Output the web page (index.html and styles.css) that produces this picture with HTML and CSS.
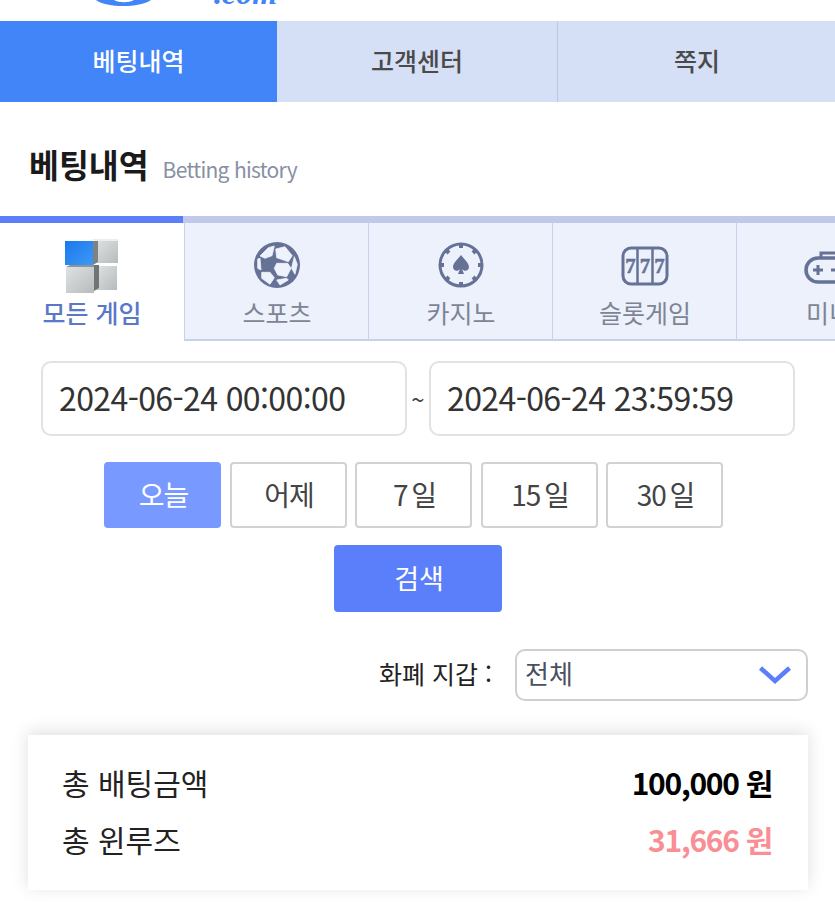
FILE: index.html
```html
<!DOCTYPE html>
<html lang="ko">
<head>
  <meta charset="UTF-8" />
  <title>베팅내역</title>
  <link rel="stylesheet" href="styles.css">
</head>
<body>
  <!-- 로고 (위쪽이 잘려 있음) -->
  <div class="logo-bar">
    <svg class="logo-arc" width="60" height="8" viewBox="0 0 60 8"><path d="M1 0 C12 8 44 8 56 0Z" fill="#4285f8"/><path d="M19 0 C24 3 34 3 39 0Z" fill="#fff"/></svg>
    <span class="logo-com">.com</span>
  </div>

  <nav class="top-nav">
    <a class="top-nav-item active">베팅내역</a>
    <a class="top-nav-item mid">고객센터</a>
    <a class="top-nav-item">쪽지</a>
  </nav>

  <div class="page-title">
    <h2>베팅내역</h2>
    <span>Betting history</span>
  </div>

  <div class="game-tabs">
    <div class="game-tab active">
      <svg class="tab-icon" width="54" height="56" viewBox="0 0 54 56">
        <defs>
          <linearGradient id="grey" x1="0" y1="0" x2="1" y2="1"><stop offset="0" stop-color="#dfe2e2"/><stop offset="1" stop-color="#b6bbbd"/></linearGradient>
          <linearGradient id="blue" x1="0" y1="0" x2="1" y2="1"><stop offset="0" stop-color="#1a78ee"/><stop offset="1" stop-color="#3d99f4"/></linearGradient>
        </defs>
        <rect x="30" y="2" width="23" height="22" fill="url(#grey)"/>
        <path d="M27 0 L53 0 L53 2 L30 2Z" fill="#eceeee"/>
        <path d="M28 2 L28 26 L33 23 L33 2Z" fill="#7d8385"/>
        <rect x="0" y="2" width="28" height="24" fill="url(#blue)"/>
        <rect x="31" y="27" width="21" height="24" fill="url(#grey)"/>
        <path d="M29 26 L29 52 L34 49 L34 26Z" fill="#6f7577"/>
        <rect x="1" y="28" width="28" height="26" fill="url(#grey)"/>
        <path d="M1 28 L5 26 L29 26 L29 28Z" fill="#8e9496"/>
      </svg>
      <span>모든 게임</span>
    </div>
    <div class="game-tab">
      <svg class="tab-icon" width="54" height="56" viewBox="0 0 54 56">
        <circle cx="27" cy="26" r="23" fill="#667196"/>
        <path fill="#eef2fd" stroke="#eef2fd" stroke-width=".8" stroke-linejoin="round" d="M10 17 L18.300 8.700 L24.300 7 L22 16.700 L15 19.300Z M25.700 10 L35 7.700 L42.300 16.700 L38.300 22.700 L26.700 18.700Z M44.300 17.700 L47.300 25.300 L45 35.300 L41.500 29.300Z M26.700 24.300 L37.700 24.300 L41 29.300 L36.700 37.700 L27.700 36 L24.300 29.300Z M11.700 33.300 L20 33.300 L24.300 38.700 L20 45.300 L11.700 39.300Z M26.700 41 L36.700 39.300 L38.300 41 L30 46Z M7.700 20 L10 19.300 L11 31 L7.700 29.300Z"/>
      </svg>
      <span>스포츠</span>
    </div>
    <div class="game-tab">
      <svg class="tab-icon" width="54" height="56" viewBox="0 0 54 56">
        <circle cx="27" cy="26" r="21" fill="none" stroke="#667196" stroke-width="3"/>
        <g stroke="#667196" stroke-width="4">
          <path d="M27 4v5M27 43v5M5 26h5M44 26h5M11.500 10.500l3.500 3.500M39 38l3.500 3.500M42.500 10.500L39 14M15 38l-3.500 3.500"/>
        </g>
        <path fill="#667196" d="M27 16 C30 20 35 24 35 28 C35 32 30 33 28 30 L30 35 L24 35 L26 30 C24 33 19 32 19 28 C19 24 24 20 27 16Z"/>
      </svg>
      <span>카지노</span>
    </div>
    <div class="game-tab">
      <svg class="tab-icon" width="54" height="56" viewBox="0 0 54 56">
        <rect x="5" y="9" width="44" height="36" rx="8" fill="none" stroke="#667196" stroke-width="3"/>
        <path d="M19.500 9v36M34.500 9v36" stroke="#667196" stroke-width="2.500"/>
        <g class="slot-seven">
          <text x="12.500" y="34">7</text>
          <text x="27" y="34">7</text>
          <text x="41.500" y="34">7</text>
        </g>
      </svg>
      <span>슬롯게임</span>
    </div>
    <div class="game-tab">
      <svg class="tab-icon" width="54" height="56" viewBox="0 0 54 56">
        <path d="M19 19 V14 H35 V19" fill="none" stroke="#667196" stroke-width="3"/>
        <rect x="4" y="19" width="46" height="24" rx="12" fill="none" stroke="#667196" stroke-width="3.500"/>
        <path d="M11 31h10M16 26v10M29 31h4" stroke="#667196" stroke-width="3"/>
      </svg>
      <span>미니</span>
    </div>
  </div>

  <div class="date-range">
    <div class="date-input">2024-06-24 00:00:00</div>
    <span class="tilde">~</span>
    <div class="date-input">2024-06-24 23:59:59</div>
  </div>

  <div class="quick-days">
    <button class="day-btn active">오늘</button>
    <button class="day-btn">어제</button>
    <button class="day-btn">7 일</button>
    <button class="day-btn">15 일</button>
    <button class="day-btn">30 일</button>
  </div>

  <div class="search-row">
    <button class="search-btn">검색</button>
  </div>

  <div class="wallet-row">
    <label class="wallet-label">화폐 지갑 :</label>
    <div class="wallet-select">
      <span>전체</span>
      <svg width="34" height="20" viewBox="0 0 34 20"><path d="M2.500 3 L17 16 L31.500 3" fill="none" stroke="#5b7ffb" stroke-width="4.500"/></svg>
    </div>
  </div>

  <div class="summary">
    <div class="summary-row">
      <span>총 배팅금액</span>
      <strong>100,000 원</strong>
    </div>
    <div class="summary-row">
      <span>총 윈루즈</span>
      <strong class="loss">31,666 원</strong>
    </div>
  </div>
</body>
</html>
```

FILE: styles.css
```css
html, body { margin: 0; padding: 0; height: 902px; overflow: hidden; }
body { width: 835px; background: #fff; font-family: "Noto Sans CJK KR", "Noto Sans", sans-serif; color: #222; }
button { font-family: inherit; }

.logo-bar { height: 21px; overflow: hidden; position: relative; }
.logo-arc { position: absolute; left: 95px; top: 0; }
.logo-com { position: absolute; left: 214px; top: -25px; font: italic bold 32px "Liberation Serif", serif; color: #4285f8; }

.top-nav { display: flex; height: 81px; background: #d5dff5; }
.top-nav-item { flex: 0 0 278px; box-sizing: border-box; display: flex; align-items: center; justify-content: center; padding-bottom: 4px; font-size: 25px; font-weight: 500; color: #4a4a4a; }
.top-nav-item.active { flex-basis: 277px; background: #4285f8; color: #fff; }
.top-nav-item.mid { flex-basis: 281px; border-right: 1px solid #bcc8e6; }

.page-title { display: flex; align-items: baseline; height: 114px; box-sizing: border-box; padding: 39px 0 0 29px; }
.page-title h2 { margin: 0; font-size: 32.500px; font-weight: 700; color: #1a1a1a; line-height: 46px; }
.page-title span { margin-left: 14px; font-size: 21px; letter-spacing: -.7px; color: #8790a3; }

.game-tabs { display: flex; width: 835px; height: 125px; box-sizing: border-box; border-top: 7px solid #c0c9ea; }
.game-tab { flex: 0 0 184px; box-sizing: border-box; display: flex; flex-direction: column; align-items: center; background: #edf1fc; border-left: 1px solid #c8d1ec; border-bottom: 2px solid #c8d1ec; padding-left: 1px; color: #7d8595; font-size: 25px; padding-top: 16px; }
.game-tab span { line-height: 36px; margin-top: -1px; white-space: nowrap; }
.tab-icon { display: block; }
.game-tab.active { background: #fff; color: #5b78c8; font-weight: 500; border-left: 0; border-bottom: 0; padding-left: 0; position: relative; }
.game-tab.active::before { content: ""; position: absolute; left: 0; right: 1px; top: -7px; height: 7px; background: #5b7ffb; }
.slot-seven text { font: bold 21px "Liberation Serif", serif; fill: #667196; stroke: #667196; stroke-width: .5px; text-anchor: middle; }

.date-range { display: flex; align-items: center; margin: 20px 0 0 41px; }
.date-input { width: 366px; height: 75px; box-sizing: border-box; border: 2px solid #e2e2e2; border-radius: 10px; padding-left: 16px; line-height: 69px; font-size: 32px; letter-spacing: -.6px; color: #333; }
.tilde { width: 22px; text-align: center; font-size: 24px; color: #444; }

.quick-days { display: flex; justify-content: center; gap: 8.500px; margin-top: 26px; padding-right: 8px; }
.day-btn { width: 117px; height: 66px; box-sizing: border-box; background: #fff; border: 2px solid #d2d2d2; border-radius: 4px; font-size: 28px; letter-spacing: -1px; word-spacing: -3px; color: #444; padding: 0 0 2px 2px; }
.day-btn.active { background: #7899ff; border-color: #7899ff; color: #fff; }

.search-row { display: flex; justify-content: center; margin-top: 17px; }
.search-btn { width: 168px; height: 67px; background: #5b7ffb; border: 0; border-radius: 4px; color: #fff; font-size: 27px; padding: 0 0 2px 3px; }

.wallet-row { display: flex; justify-content: flex-end; align-items: center; margin: 37px 27px 0 0; }
.wallet-label { font-size: 25px; color: #222; margin: 0 23px 4px 0; }
.wallet-select { width: 293px; height: 52px; box-sizing: border-box; border: 2px solid #cfcfcf; border-radius: 10px; display: flex; align-items: center; justify-content: space-between; padding: 0 14px 0 8px; font-size: 26px; color: #4a5060; }
.wallet-select span { padding-bottom: 5px; }

.summary { margin: 34px 27px 0 28px; height: 155px; box-sizing: border-box; padding: 18px 36px 0 34px; background: #fff; box-shadow: 0 -3px 16px rgba(0, 0, 0, .13); }
.summary-row { display: flex; justify-content: space-between; align-items: center; height: 57px; font-size: 30px; color: #222; }
.summary-row strong { font-weight: 700; color: #000; letter-spacing: -1.300px; }
.summary-row strong.loss { color: #f98f95; }
```
